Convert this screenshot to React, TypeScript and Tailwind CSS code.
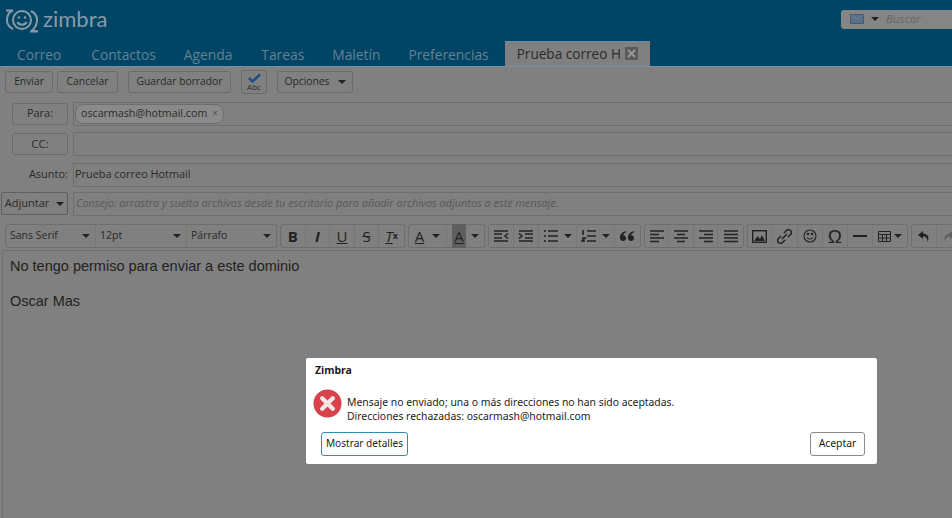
const ui = "font-['Open_Sans',sans-serif]";

function Caret({ className = "" }: { className?: string }) {
  return <span className={`inline-block w-0 h-0 border-x-[4px] border-x-transparent border-t-[4px] border-t-[#222] ${className}`} />;
}

function ToolButton({ label, caret, className = "" }: { label: string; caret?: boolean; className?: string }) {
  return (
    <div className={`h-[22px] flex items-center justify-center gap-[8px] rounded-[3px] border border-[#6b6b6b] text-[10.3px] text-[#2a2a2a] ${className}`}>
      {label}
      {caret && <Caret />}
    </div>
  );
}

function Logo() {
  return (
    <svg width="34" height="24" viewBox="0 0 34 24" fill="none" stroke="#8a9aa5" strokeWidth="2">
      <path d="M1 1.500 L8 1.500 C3.500 3 2 7 2 11 C2 15 4 18 8 20" />
      <circle cx="17" cy="11" r="9" />
      <path d="M12.500 13 C14 16.500 20 16.500 21.500 13" />
      <circle cx="14" cy="8.500" r="1.200" fill="#8a9aa5" stroke="none" />
      <circle cx="20" cy="8.500" r="1.200" fill="#8a9aa5" stroke="none" />
      <path d="M26 2 C30 4 32 7.500 32 11 C32 15 30 19 27 21.500 L33 22.500 L25 22.500" />
    </svg>
  );
}

function Icon({ children, w = 25 }: { children: React.ReactNode; w?: number }) {
  return (
    <div className="h-[22px] flex items-center justify-center border-r border-[#777] last:border-r-0 shrink-0" style={{ width: w }}>
      {children}
    </div>
  );
}

function Group({ children }: { children: React.ReactNode }) {
  return <div className="flex h-[24px] items-center rounded-[3px] border border-[#6e6e6e] shrink-0">{children}</div>;
}

function Lines({ d }: { d: string }) {
  return (
    <svg width="16" height="14" viewBox="0 0 16 14" fill="none" stroke="#222" strokeWidth="1.6">
      <path d={d} />
    </svg>
  );
}

function Letter({ text, className = "" }: { text: string; className?: string }) {
  return <span className={`text-[15px] leading-none text-[#222] font-['Open_Sans',sans-serif] ${className}`}>{text}</span>;
}

function Select({ label, w }: { label: string; w: number }) {
  return (
    <div className="h-[22px] flex items-center justify-between pl-[4px] pr-[5px] border-r border-[#777] text-[10.5px] text-[#2a2a2a]" style={{ width: w }}>
      {label}
      <Caret />
    </div>
  );
}

function EditorToolbar() {
  return (
    <div className={`h-[26px] mt-[7px] pl-[5px] flex items-center gap-[3px] overflow-hidden ${ui}`}>
      <Group>
        <Select label="Sans Serif" w={90} />
        <Select label="12pt" w={91} />
        <div className="h-[22px] w-[89px] flex items-center justify-between pl-[4px] pr-[5px] text-[10.5px] text-[#2a2a2a]">
          Párrafo
          <Caret />
        </div>
      </Group>
      <Group>
        <Icon w={24.6}><Letter text="B" className="font-bold" /></Icon>
        <Icon w={24.6}><Letter text="I" className="italic font-bold" /></Icon>
        <Icon w={24.6}><Letter text="U" className="underline" /></Icon>
        <Icon w={24.6}><Letter text="S" className="line-through" /></Icon>
        <Icon w={24.6}><Letter text="T" className="italic underline" /><span className="text-[9px] font-bold text-[#222]">x</span></Icon>
      </Group>
      <Group>
        <Icon w={38}><Letter text="A" className="underline mr-[8px]" /><Caret /></Icon>
        <Icon w={37}><span className="bg-[#5f5f5f] px-[2px] mr-[5px]"><Letter text="A" className="underline" /></span><Caret /></Icon>
      </Group>
      <Group>
        <Icon w={25}><Lines d="M1 2h14M1 12h14M1 5h8M1 9h8M15 4.500l-3 2.500 3 2.500" /></Icon>
        <Icon w={25}><Lines d="M1 2h14M1 12h14M7 5h8M7 9h8M1 4.500l3 2.500-3 2.500" /></Icon>
        <Icon w={38}><span className="mr-[5px]"><Lines d="M1 2h2M5 2h10M1 7h2M5 7h10M1 12h2M5 12h10" /></span><Caret /></Icon>
        <Icon w={38}><span className="mr-[5px]"><Lines d="M2 1v5M1 9h3l-3 3h3M6 2h9M6 7h9M6 12h9" /></span><Caret /></Icon>
        <Icon w={25}>
          <svg width="14" height="10" viewBox="0 0 14 10" fill="#222">
            <path d="M6 0C2.500 1 0 3 0 6.500 0 8.500 1.200 10 3 10s3-1.300 3-3-1.200-2.800-3-2.800C3.500 2.800 4.500 1.800 6 1.200zM14 0c-3.500 1-6 3-6 6.500C8 8.500 9.200 10 11 10s3-1.300 3-3-1.200-2.800-3-2.800c.5-1.400 1.500-2.400 3-3z" />
          </svg>
        </Icon>
      </Group>
      <Group>
        <Icon w={24.500}><Lines d="M1 2h14M1 5.500h9M1 9h14M1 12.500h9" /></Icon>
        <Icon w={24.500}><Lines d="M1 2h14M4 5.500h8M1 9h14M4 12.500h8" /></Icon>
        <Icon w={24.500}><Lines d="M1 2h14M6 5.500h9M1 9h14M6 12.500h9" /></Icon>
        <Icon w={24.500}><Lines d="M1 2h14M1 5.500h14M1 9h14M1 12.500h14" /></Icon>
      </Group>
      <Group>
        <Icon>
          <svg width="15" height="13" viewBox="0 0 15 13">
            <rect x="0.700" y="0.700" width="13.600" height="11.600" fill="none" stroke="#222" strokeWidth="1.400" />
            <path d="M2 11l3.500-5 2.500 3 2-4 3 6z" fill="#222" />
          </svg>
        </Icon>
        <Icon>
          <svg width="15" height="15" viewBox="0 0 15 15" fill="none" stroke="#222" strokeWidth="1.500">
            <path d="M7 4l2.500-2.500a2 2 0 0 1 4 4L11 8M4 7L1.500 9.500a2 2 0 0 0 4 4L8 11M5 10l5-5" />
          </svg>
        </Icon>
        <Icon>
          <svg width="14" height="14" viewBox="0 0 14 14" fill="none" stroke="#222" strokeWidth="1.100">
            <circle cx="7" cy="7" r="6" />
            <path d="M4 8.500c1.500 2 4.500 2 6 0" />
            <circle cx="5" cy="5" r="0.700" fill="#222" />
            <circle cx="9" cy="5" r="0.700" fill="#222" />
          </svg>
        </Icon>
        <Icon><span className="text-[19px] leading-none text-[#222] font-['Liberation_Sans',sans-serif]">Ω</span></Icon>
        <Icon><span className="w-[14px] h-[2px] bg-[#222]" /></Icon>
        <Icon w={34}>
          <svg className="mr-[3px]" width="13" height="11" viewBox="0 0 13 11" fill="none" stroke="#222" strokeWidth="1">
            <path d="M.5.5h12v10H.5zM.5 3.500h12M.5 7h12M4.500 3.500v7M8.500 3.500v7" />
          </svg>
          <Caret />
        </Icon>
      </Group>
      <Group>
        <Icon>
          <svg width="14" height="13" viewBox="0 0 14 13" fill="#222">
            <path d="M6 1L1 5l5 4V6.500c3 0 4.500 1.500 4.500 5.500 2-4 1-8-4.500-8.500z" />
          </svg>
        </Icon>
        <Icon>
          <svg width="14" height="13" viewBox="0 0 14 13" fill="#5f5f5f">
            <path d="M8 1l5 4-5 4V6.500c-3 0-4.500 1.500-4.500 5.500-2-4-1-8 4.500-8.500z" />
          </svg>
        </Icon>
      </Group>
    </div>
  );
}

function Dialog() {
  return (
    <div className="absolute left-[306px] top-[358px] w-[571px] h-[106px] rounded-[2px] bg-white pt-[5px] pl-[9px] pr-[12px] font-['Noto_Sans',sans-serif] text-[#1c1c1c]">
      <div className="text-[10.500px] font-bold leading-[14px]">Zimbra</div>
      <div className="mt-[12px] flex items-start gap-[5px] -ml-[2px]">
        <svg width="29" height="29" viewBox="0 0 30 30">
          <circle cx="15" cy="15" r="14.500" fill="#d9414c" />
          <path d="M9.500 9.500l11 11M20.500 9.500l-11 11" stroke="#f4e6e6" strokeWidth="4.500" strokeLinecap="round" />
        </svg>
        <div className="text-[10.400px] leading-[14px] mt-[6px]">
          <div>Mensaje no enviado; una o más direcciones no han sido aceptadas.</div>
          <div>Direcciones rechazadas: oscarmash@hotmail.com</div>
        </div>
      </div>
      <div className="mt-[9px] flex items-center justify-between">
        <div className="ml-[6px] w-[87px] h-[24px] flex items-center justify-center rounded-[3px] border border-[#2f8fb3] text-[10.100px]">Mostrar detalles</div>
        <div className="w-[55px] h-[24px] flex items-center justify-center rounded-[3px] border border-[#8a8a8a] text-[10.400px]">Aceptar</div>
      </div>
    </div>
  );
}

export default function App() {
  return (
    <div className="relative w-[952px] h-[518px] overflow-hidden bg-[#808080]">
      {/* cabecera */}
      <header className={`h-[66px] bg-[#004565] ${ui}`}>
        <div className="h-[42px] pl-[5px] flex items-center justify-between">
          <div className="flex items-center gap-[4px] -mt-[1px]">
            <Logo />
            <span className="text-[22px] leading-none text-[#8a9aa5] font-['Lato',sans-serif] -mt-[4px]">zimbra</span>
          </div>
          <div className="w-[111px] h-[19px] -mt-[4px] rounded-l-[3px] bg-[#858585] flex items-center pl-[9px] gap-[7px]">
            <svg width="14" height="10" viewBox="0 0 14 10">
              <rect x="0.500" y="0.500" width="13" height="9" fill="#54718a" stroke="#4a5a6a" />
              <path d="M1 1l6 4 6-4" fill="none" stroke="#6d8498" />
            </svg>
            <Caret />
            <span className="text-[11.500px] italic text-[#666]">Buscar</span>
          </div>
        </div>
        <nav className="h-[24px] flex text-[13.800px] text-[#668193]">
          <span className="ml-[17px] leading-[25px]">Correo</span>
          <span className="ml-[30px] leading-[25px]">Contactos</span>
          <span className="ml-[28px] leading-[25px]">Agenda</span>
          <span className="ml-[29px] leading-[25px]">Tareas</span>
          <span className="ml-[28px] leading-[25px]">Maletín</span>
          <span className="ml-[28px] leading-[25px]">Preferencias</span>
          <div className="ml-[16px] w-[145px] h-[25px] -mt-[1px] bg-[#808080] flex items-center pl-[12px] gap-[4px] text-[#2c2c2c] text-[13.600px] border-t border-[#6a8fae]">
            Prueba correo H
            <span className="w-[13px] h-[13px] bg-[#5a5a5a] flex items-center justify-center -mt-[1px]">
              <svg width="9" height="9" viewBox="0 0 9 9" stroke="#9a9a9a" strokeWidth="1.800"><path d="M1 1l7 7M8 1l-7 7" /></svg>
            </span>
          </div>
        </nav>
      </header>

      {/* acciones */}
      <div className={`h-[30px] pl-[5px] flex items-center gap-[4px] ${ui} border-t border-[#7790a6]`}>
        <ToolButton label="Enviar" className="w-[48px]" />
        <ToolButton label="Cancelar" className="w-[61px]" />
        <ToolButton label="Guardar borrador" className="w-[103px] ml-[6px]" />
        <div className="w-[26px] h-[24px] ml-[6px] rounded-[3px] border border-[#6b6b6b] flex flex-col items-center justify-center leading-none">
          <svg width="15" height="10" viewBox="0 0 15 10" fill="none" stroke="#1c4f86" strokeWidth="2.600"><path d="M2 5l3.500 3.500L13 1.500" /></svg>
          <span className="text-[8px] text-[#2a2a2a]">Abc</span>
        </div>
        <ToolButton label="Opciones" caret className="w-[76px] ml-[6px]" />
      </div>

      {/* destinatarios */}
      <div className={`${ui} text-[11px] text-[#2a2a2a]`}>
        <div className="h-[25px] mt-[5px] flex items-center">
          <div className="ml-[12px] w-[56px] h-[22px] rounded-[3px] border border-[#6b6b6b] flex items-center justify-center">Para:</div>
          <div className="ml-[5px] flex-1 h-[24px] border-y border-l border-[#6e6e6e] flex items-center pl-[1px]">
            <span className="h-[20px] rounded-[8px] border border-[#6e6e6e] bg-[#8a8a8a] flex items-center pl-[5px] pr-[5px] gap-[5px] text-[10.700px]">
              oscarmash@hotmail.com
              <span className="text-[10px] text-[#555]">×</span>
            </span>
          </div>
        </div>
        <div className="h-[25px] mt-[5px] flex items-center">
          <div className="ml-[12px] w-[56px] h-[22px] rounded-[3px] border border-[#6b6b6b] flex items-center justify-center text-[11.500px]">CC:</div>
          <div className="ml-[5px] flex-1 h-[24px] border-y border-l border-[#6e6e6e]" />
        </div>
        <div className="h-[25px] mt-[6px] flex items-center">
          <div className="w-[68px] text-right text-[11px]">Asunto:</div>
          <div className="ml-[5px] flex-1 h-[24px] border-y border-l border-[#6e6e6e] flex items-center pl-[1px] text-[10.900px]">Prueba correo Hotmail</div>
        </div>
        <div className="h-[25px] mt-[4px] flex items-center">
          <div className="ml-[1px] w-[67px] h-[23px] rounded-[2px] border border-[#5f5f5f] flex items-center justify-center gap-[7px] text-[11px]">
            Adjuntar
            <Caret />
          </div>
          <div className="ml-[5px] flex-1 h-[24px] border-y border-l border-[#6e6e6e] flex items-center pl-[2px] italic text-[10.900px] text-[#585858]">
            Consejo: arrastra y suelta archivos desde tu escritorio para añadir archivos adjuntos a este mensaje.
          </div>
        </div>
      </div>

      <EditorToolbar />

      {/* cuerpo */}
      <div className="ml-[2px] mt-[1px] h-[280px] border-l border-t border-[#6e6e6e] pl-[7px] pt-[6px] text-[14.500px] leading-[18px] text-[#222] font-['Liberation_Sans',sans-serif]">
        <p>No tengo permiso para enviar a este dominio</p>
        <p className="mt-[17px]">Oscar Mas</p>
      </div>

      <Dialog />
    </div>
  );
}
